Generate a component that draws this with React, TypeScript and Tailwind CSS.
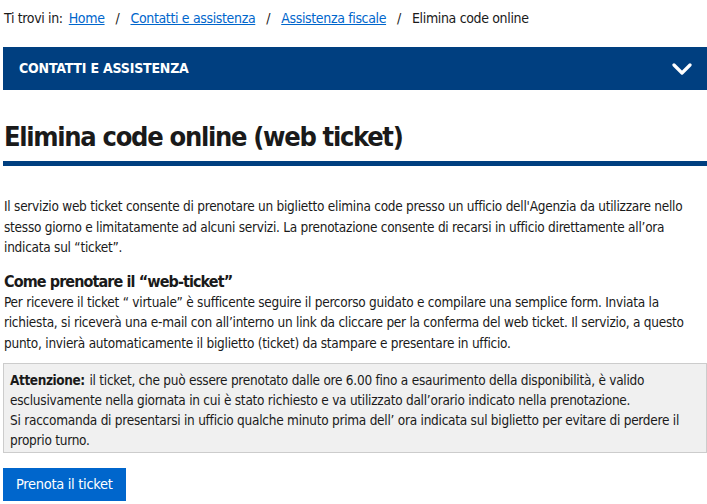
import React from 'react';

const font = { fontFamily: '"DejaVu Sans Condensed", "Liberation Sans", sans-serif' };

const Chevron = () => (
  <svg width="20" height="12" viewBox="0 0 20 12" fill="none">
    <path d="M2 2l8 8 8-8" stroke="white" strokeWidth="3.2" strokeLinecap="round" strokeLinejoin="round" />
  </svg>
);

export default function App() {
  return (
    <div className="w-[707px] h-[504px] overflow-hidden bg-white text-[#1a1a1a]" style={font}>
      {/* breadcrumb */}
      <nav className="flex items-center h-[37px] pl-[4px] text-[14px] tracking-[-0.35px] text-[#1a1a1a]">
        <span>Ti trovi in:</span>
        <a className="ml-[6px] text-[#0066cc] underline">Home</a>
        <span className="mx-[11px]">/</span>
        <a className="text-[#0066cc] underline">Contatti e assistenza</a>
        <span className="mx-[11px]">/</span>
        <a className="text-[#0066cc] underline">Assistenza fiscale</a>
        <span className="mx-[11px]">/</span>
        <span>Elimina code online</span>
      </nav>

      <div className="ml-[3px] mt-[10px] h-[43px] bg-[#003f80] flex items-center justify-between pl-[16px] pr-[15px]">
        <span className="text-white font-bold text-[14px] tracking-[-0.2px]">CONTATTI E ASSISTENZA</span>
        <Chevron />
      </div>

      <div className="pl-[3px]">
        <h1 className="pl-[1px] mt-[29px] text-[27px] leading-[36px] font-semibold tracking-[-1.3px] text-[#1a1a1a]">
          Elimina code online (web ticket)
        </h1>
        <div className="mt-[6px] h-[5px] bg-[#003f80]" />

        <p className="pl-[1px] mt-[30px] text-[13.5px] leading-[20.5px] tracking-[-0.25px]">
          Il servizio web ticket consente di prenotare un biglietto elimina code presso un ufficio dell'Agenzia da utilizzare nello stesso giorno e limitatamente ad alcuni servizi. La prenotazione consente di recarsi in ufficio direttamente all’ora indicata sul “ticket”.
        </p>

        <h3 className="pl-[1px] mt-[14px] text-[16px] leading-[20px] font-semibold tracking-[-0.9px]">Come prenotare il “web-ticket”</h3>
        <p className="pl-[1px] text-[13.5px] leading-[20.5px] tracking-[-0.25px]">
          Per ricevere il ticket “ virtuale” è sufficente seguire il percorso guidato e compilare una semplice form. Inviata la richiesta, si riceverà una e-mail con all’interno un link da cliccare per la conferma del web ticket. Il servizio, a questo punto, invierà automaticamente il biglietto (ticket) da stampare e presentare in ufficio.
        </p>

        <div className="mt-[10px] bg-[#f0f0f0] border border-[#cccccc] pl-[6px] pr-[10px] pt-[6px] pb-[2px] text-[13.5px] leading-[20px] tracking-[-0.25px]">
          <p>
            <strong className="font-bold tracking-[-0.4px] mr-[1px]">Attenzione:</strong> il ticket, che può essere prenotato dalle ore 6.00 fino a esaurimento della disponibilità, è valido esclusivamente nella giornata in cui è stato richiesto e va utilizzato dall’orario indicato nella prenotazione.
          </p>
          <p>
            Si raccomanda di presentarsi in ufficio qualche minuto prima dell’ ora indicata sul biglietto per evitare di perdere il proprio turno.
          </p>
        </div>

        <button className="mt-[15px] h-[33px] px-[13px] bg-[#0066cc] text-white text-[14.5px] tracking-[-0.3px]">Prenota il ticket</button>
      </div>
    </div>
  );
}
